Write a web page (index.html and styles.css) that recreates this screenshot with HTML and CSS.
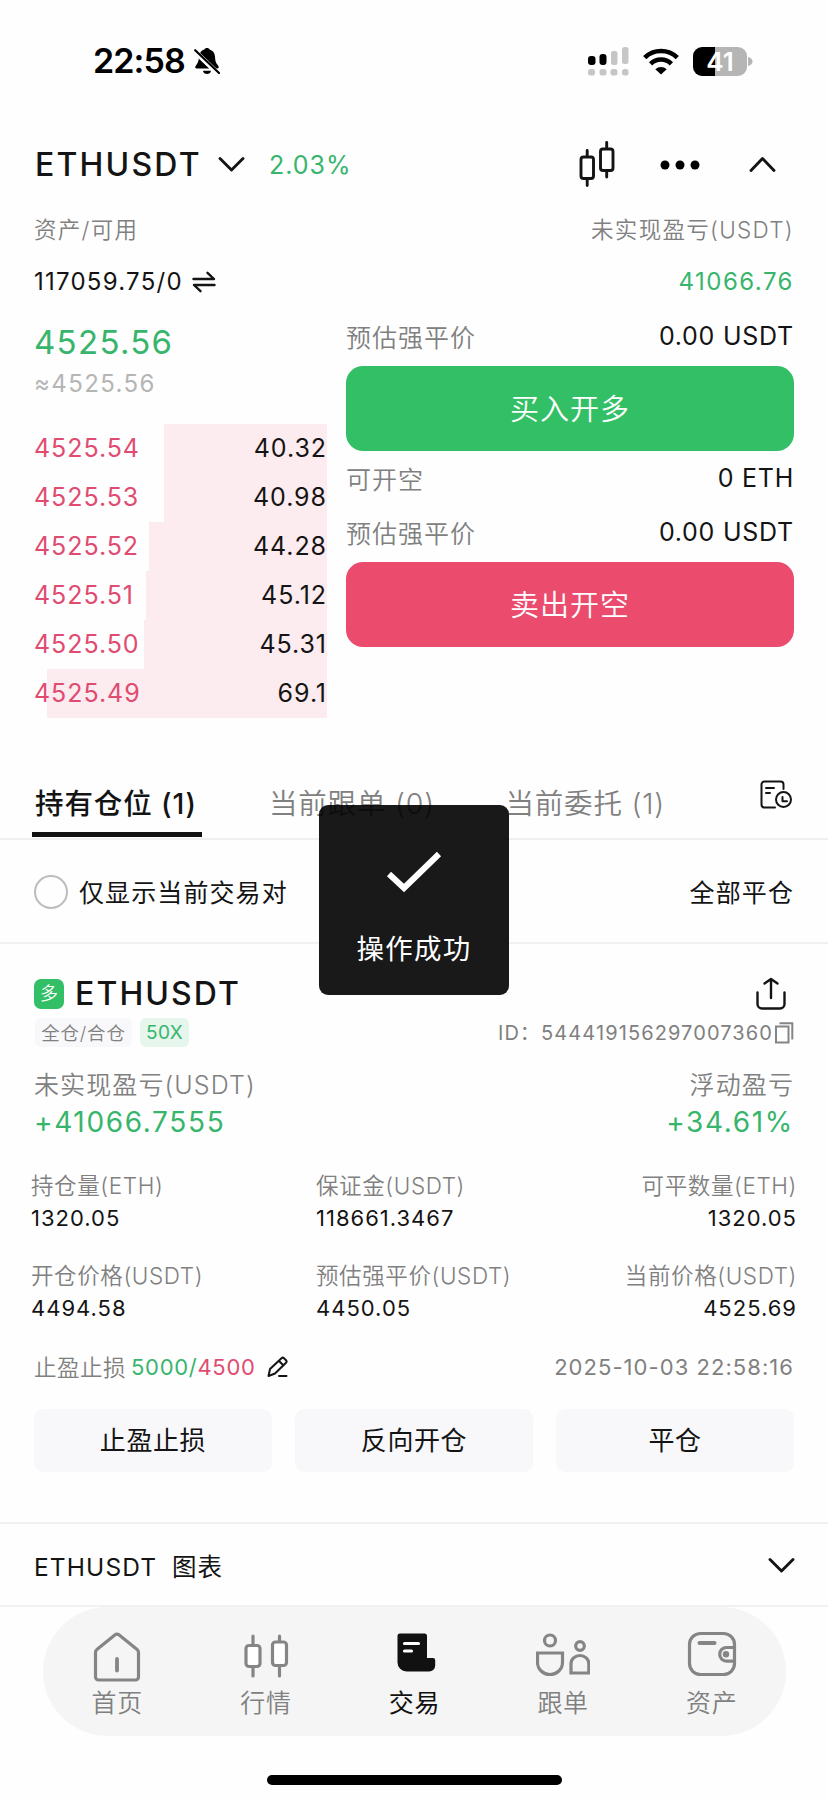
FILE: index.html
```html
<!DOCTYPE html>
<html lang="zh-CN">
<head>
<meta charset="utf-8">
<title>ETHUSDT</title>
<link rel="stylesheet" href="styles.css">
</head>
<body>
<div class="phone">
  <header class="status">
    <div class="clock">22:58</div>
    <svg class="bell" width="26" height="28" viewBox="0 0 26 28"><path d="M3 21.500C1 21.500 .6 20 2 18.400C4.500 15.500 4.600 13.500 5 9.500C5.400 5.500 7.600 3 10.400 2.400C11 .4 15 .4 15.600 2.400C18.600 3.200 20.700 5.500 21 9.500C21.300 14 21.600 15.500 24 18.400C25.300 20 25 21.500 23 21.500Z"/><path d="M9 23.800h8c-.6 4.300-7.400 4.300-8 0z"/><path d="M0 3.500L25.500 28" stroke="#fff" stroke-width="5"/><path d="M1.200 3.200L25 26" stroke="#000" stroke-width="2.200" stroke-linecap="round"/></svg>
    <svg class="signal" width="42" height="29" viewBox="0 0 42 29"><g fill="#000"><rect x="0" y="9" width="7.500" height="9" rx="3"/><rect x="11.500" y="7" width="7" height="11" rx="3"/></g><g fill="#c6c6c6"><rect x="23" y="4" width="6.500" height="14" rx="2.500"/><rect x="34" y="0" width="6.500" height="17" rx="2.500"/><rect x="0" y="22" width="7" height="6.500" rx="2.500"/><rect x="11.500" y="22" width="7" height="6.500" rx="2.500"/><rect x="22.500" y="22" width="7" height="6.500" rx="2.500"/><rect x="34" y="22" width="6.500" height="6.500" rx="2.500"/></g></svg>
    <svg class="wifi" width="36" height="27" viewBox="0 0 36 27" fill="none" stroke="#000" stroke-width="4.600"><path d="M1.700 9.700A23.300 23.300 0 0 1 34.300 9.700"/><path d="M7.600 15.800A14.800 14.800 0 0 1 28.400 15.800"/><path d="M18 26.600L12.300 21.200A8.300 8.300 0 0 1 23.700 21.200Z" fill="#000" stroke="none"/></svg>
    <div class="battery"><span>41</span></div>
    <svg class="battery-cap" width="5" height="9" viewBox="0 0 5 9"><path d="M0 0C6 1.500 6 7.500 0 9Z" fill="#b5b5b5"/></svg>
  </header>

  <section class="topbar">
    <h1 class="pair">ETHUSDT</h1>
    <svg class="chev" width="27" height="17" viewBox="0 0 27 17"><path class="line3" d="M2 2.500L13.500 14L25 2.500"/></svg>
    <span class="change up">2.03%</span>
    <svg class="candles" width="36" height="46" viewBox="0 0 36 46"><g class="line3"><rect x="2" y="16" width="12.500" height="21.500" rx="2.500"/><path d="M8.200 9.500v6M8.200 38v6.500"/><rect x="21.500" y="8" width="12.500" height="21.500" rx="2.500"/><path d="M27.700 1.500v6M27.700 30v6"/></g></svg>
    <svg class="dots" width="40" height="10" viewBox="0 0 40 10"><circle cx="5" cy="5" r="4.500"/><circle cx="20" cy="5" r="4.500"/><circle cx="35" cy="5" r="4.500"/></svg>
    <svg class="caret" width="27" height="17" viewBox="0 0 27 17"><path class="line3" d="M2 14.500L13.500 2.500L25 14.500"/></svg>
  </section>

  <section class="assets">
    <div class="row label-row"><span class="cn">资产/可用</span><span class="cn">未实现盈亏(USDT)</span></div>
    <div class="row value-row"><span class="asset">117059.75/0</span>
      <svg class="swap" width="24" height="22" viewBox="0 0 24 22"><path class="line25" d="M1.500 8h20.500L15.500 1.800M22.500 14H2L8.500 20.200"/></svg>
      <span class="pnl up">41066.76</span></div>
  </section>

  <section class="trade">
    <div class="book">
      <div class="last up">4525.56</div>
      <div class="approx">≈4525.56</div>
      <div class="ask"><i style="width:163px"></i><span>4525.54</span><b>40.32</b></div>
      <div class="ask"><i style="width:163px"></i><span>4525.53</span><b>40.98</b></div>
      <div class="ask"><i style="width:178px"></i><span>4525.52</span><b>44.28</b></div>
      <div class="ask"><i style="width:181px"></i><span>4525.51</span><b>45.12</b></div>
      <div class="ask"><i style="width:183px"></i><span>4525.50</span><b>45.31</b></div>
      <div class="ask"><i style="width:280px"></i><span>4525.49</span><b>69.1</b></div>
    </div>
    <div class="order">
      <div class="order-row r1"><span class="cn">预估强平价</span><span class="num">0.00 USDT</span></div>
      <button class="big buy">买入开多</button>
      <div class="order-row r2"><span class="cn">可开空</span><span class="num">0 ETH</span></div>
      <div class="order-row r3"><span class="cn">预估强平价</span><span class="num">0.00 USDT</span></div>
      <button class="big sell">卖出开空</button>
    </div>
  </section>

  <nav class="tabs">
    <span class="tab on">持有仓位 (1)</span>
    <span class="tab">当前跟单 (0)</span>
    <span class="tab">当前委托 (1)</span>
    <svg class="history" width="33" height="30" viewBox="0 0 33 30"><g class="line2"><path d="M23.500 9V4.500a3 3 0 0 0-3-3H4.500a3 3 0 0 0-3 3v20a3 3 0 0 0 3 3H15"/><path d="M6 8h8M6 13h4"/><circle cx="23.500" cy="19.500" r="7.500"/><path d="M22.500 17v4.200h4.500"/></g></svg>
  </nav>

  <section class="filter">
    <span class="radio"></span><span class="only">仅显示当前交易对</span><span class="close-all">全部平仓</span>
  </section>

  <section class="position">
    <div class="title">
      <span class="side">多</span><h2 class="sym">ETHUSDT</h2>
      <svg class="share" width="30" height="34" viewBox="0 0 30 34"><g class="line25"><path d="M1.500 15.500v11.500a4.500 4.500 0 0 0 4.500 4.500h18a4.500 4.500 0 0 0 4.500-4.500V15.500"/><path d="M15 21V2.500M8.500 6.500L15 2L21.500 6.500"/></g></svg>
    </div>
    <div class="meta">
      <span class="tag mode">全仓/合仓</span><span class="tag lev">50X</span>
      <span class="id-label">ID：</span><span class="id">544419156297007360</span>
      <svg class="copy" width="19" height="22" viewBox="0 0 19 22" fill="none" stroke="#858585" stroke-width="2"><rect x="1" y="4.500" width="12.500" height="16"/><path d="M4.500 1.200H17.300V17.500"/></svg>
    </div>
    <div class="row plabel"><span class="cn">未实现盈亏(USDT)</span><span class="cn">浮动盈亏</span></div>
    <div class="row pvalue up"><span>+41066.7555</span><span>+34.61%</span></div>
    <div class="grid">
      <div class="cell"><span class="k">持仓量(ETH)</span><span class="v">1320.05</span></div>
      <div class="cell"><span class="k">保证金(USDT)</span><span class="v">118661.3467</span></div>
      <div class="cell end"><span class="k">可平数量(ETH)</span><span class="v">1320.05</span></div>
      <div class="cell"><span class="k">开仓价格(USDT)</span><span class="v">4494.58</span></div>
      <div class="cell"><span class="k">预估强平价(USDT)</span><span class="v">4450.05</span></div>
      <div class="cell end"><span class="k">当前价格(USDT)</span><span class="v">4525.69</span></div>
    </div>
    <div class="tpsl">
      <span class="tp-label">止盈止损</span><span class="tp"><em class="up">5000/</em><em class="down">4500</em></span>
      <svg class="pencil" width="22" height="22" viewBox="0 0 22 22"><g class="line2"><path d="M1.500 20L3 13L14.500 2.200a1.800 1.800 0 0 1 2.500 0L19 4.200a1.800 1.800 0 0 1 0 2.500L8 17.500ZM12 5l4.500 4.500M12 20h7.500"/></g></svg>
      <time class="date">2025-10-03 22:58:16</time>
    </div>
    <div class="actions"><button>止盈止损</button><button>反向开仓</button><button>平仓</button></div>
  </section>

  <section class="chart"><span class="chart-sym">ETHUSDT</span><span class="chart-cn">图表</span>
    <svg class="chart-chev" width="27" height="17" viewBox="0 0 27 17"><path class="line3" d="M2 2.500L13.500 14L25 2.500"/></svg>
  </section>

  <nav class="dock">
    <a class="item"><svg width="50" height="54" viewBox="0 0 50 54"><g class="g3"><path d="M3.500 22.500a4 4 0 0 1 1.400-3L22.800 5a3.500 3.500 0 0 1 4.400 0L45.100 19.500a4 4 0 0 1 1.400 3V47a3 3 0 0 1-3 3H6.500a3 3 0 0 1-3-3Z"/><path d="M25 29v11.500" stroke-width="3.800"/></g></svg><span>首页</span></a>
    <a class="item"><svg width="50" height="54" viewBox="0 0 50 54"><g class="g3"><path d="M12 6v10M12 37v9M38.500 6v6M38.500 36v10"/><rect x="5" y="15.500" width="14" height="21" rx="3" fill="#fff"/><rect x="31.500" y="12" width="14" height="23.500" rx="3" fill="#fff"/></g></svg><span>行情</span></a>
    <a class="item on"><svg width="50" height="54" viewBox="0 0 50 54"><path fill="#111" d="M8.500 6a2.500 2.500 0 0 1 2.500-2.500H35.500a2.500 2.500 0 0 1 2.500 2.500V28h6a2.200 2.200 0 0 1 2.200 2.200V35.500a6 6 0 0 1-6 6H17.500a9 9 0 0 1-9-9Z"/><path d="M15.500 13.500h14M15.500 21h7" stroke="#fff" stroke-width="3.200" stroke-linecap="round"/></svg><span>交易</span></a>
    <a class="item"><svg class="people" width="54" height="54" viewBox="0 0 54 54"><g class="g3 sharp"><circle cx="14" cy="10.500" r="5.500"/><path d="M1.500 23h25v9.500a12.500 12 0 0 1-25 0Z"/><circle cx="44" cy="16" r="4.300"/><path d="M35 43V33.500a8.900 8 0 0 1 17.800 0V43Z"/></g></svg><span>跟单</span></a>
    <a class="item"><svg width="50" height="54" viewBox="0 0 50 54"><g class="g3"><rect x="2.500" y="3.500" width="45" height="41" rx="11"/><path d="M12.500 13h15" stroke-width="4"/><path d="M47 17.500H39.500a6.800 6.800 0 0 0 0 13.600H47"/></g><circle cx="39" cy="24.200" r="3.200" fill="#858585"/></svg><span>资产</span></a>
  </nav>
  <div class="home-bar"></div>

  <div class="toast">
    <svg width="56" height="44" viewBox="0 0 56 44"><path d="M3 24L18 38L53 4" fill="none" stroke="#fff" stroke-width="6"/></svg>
    <span>操作成功</span>
  </div>
</div>
</body>
</html>
```
FILE: styles.css
```css
* { box-sizing: border-box; margin: 0; padding: 0; }
body { background: #fff; }
.phone {
  position: relative; width: 828px; height: 1800px; overflow: hidden; background: #fefefe;
  display: flex; flex-direction: column; color: #141414;
  font-family: Inter, "Noto Sans CJK SC", sans-serif; font-weight: 400; line-height: 1.2; white-space: nowrap;
}
svg { display: block; flex: none; }
button { border: 0; font: inherit; color: inherit; white-space: nowrap; }
em, b, i { font-style: normal; font-weight: inherit; }
.up { color: #38b56c; }
.down { color: #e04c71; }
.cn { font-weight: 350; color: #808080; }
.row { display: flex; justify-content: space-between; align-items: center; }
.line2, .line25, .line3 { fill: none; stroke: #141414; stroke-width: 2; stroke-linecap: round; stroke-linejoin: round; }
.line25 { stroke-width: 2.4; }
.line3 { stroke-width: 2.9; }

.status { height: 126px; padding: 0 75px 3px 93px; display: flex; align-items: center; }
.clock { font-size: 34px; font-weight: 600; color: #000; width: 101px; letter-spacing: -.9px; }
.bell { margin-top: -2px; }
.signal { margin-left: auto; margin-right: 13px; }
.wifi { margin-right: 14px; }
.battery { width: 54px; height: 29px; border-radius: 9px; background: linear-gradient(90deg, #000 22px, #b5b5b5 22px); color: #fff; font-weight: 600; font-size: 26px; line-height: 29px; text-align: center; }
.battery-cap { margin-left: 1px; }

.topbar { height: 77px; display: flex; align-items: center; padding: 0 52px 0 35px; }
.pair { font-size: 32px; font-weight: 550; letter-spacing: 2.2px; width: 183px; margin-top: 2px; }
.change { font-size: 25px; letter-spacing: 1px; margin-left: 24px; font-weight: 370; }
.candles { margin-left: auto; margin-top: -2px; }
.dots { margin-left: 45px; }
.caret { margin-left: 49px; }

.assets { padding: 0 34px; }
.label-row { height: 52px; font-size: 22.5px; letter-spacing: 1.3px; }
.value-row { height: 52px; padding-top: 2px; font-size: 24px; letter-spacing: 1.25px; }
.swap { margin-left: 9px; margin-right: auto; }
.pnl { letter-spacing: 1.5px; font-weight: 370; }

.trade { height: 461px; display: flex; padding: 0 34px 0 34px; justify-content: space-between; }
.book { width: 293px; padding-top: 10px; font-weight: 370; }
.last { height: 50px; line-height: 50px; font-size: 33px; letter-spacing: 1.3px; }
.approx { height: 34px; line-height: 34px; font-size: 24px; letter-spacing: 1.4px; color: #b5b5b5; margin-bottom: 23px; }
.ask { position: relative; height: 49px; padding-bottom: 2px; display: flex; align-items: center; justify-content: space-between; font-size: 25px; letter-spacing: .95px; color: #141414; }
.ask i { position: absolute; right: 0; top: 0; height: 49px; background: #fcebef; }
.ask span, .ask b { position: relative; }
.ask span { color: #e04c71; }
.ask b { font-weight: 400; }
.order { width: 448px; }
.order-row { display: flex; justify-content: space-between; align-items: center; }
.order-row .cn { font-size: 25px; letter-spacing: 1px; }
.order-row .num { font-size: 25px; letter-spacing: .75px; margin-top: -4px; }
.r1 { height: 59px; padding-top: 2px; }
.r2 { height: 55px; padding-top: 2px; }
.r3 { height: 56px; }
.big { display: block; width: 448px; height: 85px; padding-top: 3px; border-radius: 17px; color: #fff; font-size: 29px; font-weight: 350; letter-spacing: 1px; }
.buy { background: #33bf65; }
.sell { background: #eb4b6d; }

.tabs { height: 72px; border-bottom: 2px solid #f0f0f0; display: flex; align-items: center; padding: 2px 35px 0; }
.tab { position: relative; font-size: 28.5px; font-weight: 350; color: #808080; letter-spacing: .8px; width: 236.500px; }
.tab:first-child { width: 234px; }
.tab.on { font-weight: 500; color: #141414; letter-spacing: .9px; }
.tab.on::after { content: ""; position: absolute; left: -3px; top: 45px; width: 170px; height: 5px; background: #111; }
.history { margin-left: auto; margin-top: -18px; }

.filter { height: 104px; border-bottom: 2px solid #f1f1f1; display: flex; align-items: center; padding: 2px 34px 0; font-size: 25px; letter-spacing: 1.1px; }
.radio { width: 34px; height: 34px; border: 2.5px solid #bdbdbd; border-radius: 50%; margin-right: 11px; }
.only, .close-all { padding-top: 2px; }
.close-all { margin-left: auto; }

.position { height: 578px; padding: 32px 34px 0; }
.title { height: 36px; display: flex; align-items: center; }
.side { width: 30px; height: 30px; border-radius: 7px; background: #33bf65; color: #fff; font-size: 18px; font-weight: 350; line-height: 30px; text-align: center; margin-right: 11px; }
.sym { font-size: 32px; font-weight: 550; letter-spacing: 2.1px; padding-top: 1px; }
.share { margin-left: auto; margin-right: 8px; }
.meta { height: 29px; margin-top: 6px; display: flex; align-items: center; color: #808080; font-size: 20px; }
.tag { height: 29px; line-height: 30px; border-radius: 6px; text-align: center; }
.mode { width: 97px; font-size: 18.5px; font-weight: 350; letter-spacing: .8px; background: #f8f8fb; margin-right: 8px; margin-left: 1px; }
.lev { width: 49px; font-size: 19px; letter-spacing: .4px; color: #38b56c; background: #e6f6ec; }
.id-label { margin-left: auto; width: 43px; letter-spacing: 1px; }
.id { letter-spacing: 1.1px; }
.copy { margin-left: 2px; }
.plabel { height: 32px; margin-top: 22px; font-size: 25px; letter-spacing: 1.1px; }
.pvalue { height: 36px; margin-top: 4px; font-size: 28px; letter-spacing: 1.65px; font-weight: 370; }
.grid { display: grid; grid-template-columns: 285px 240px 241px; margin: 32px -3px 0; row-gap: 32px; }
.cell { display: flex; flex-direction: column; gap: 6px; line-height: 26px; height: 58px; font-size: 22px; }
.cell.end { align-items: flex-end; }
.k { font-weight: 350; font-size: 22.5px; color: #808080; letter-spacing: .6px; }
.v { letter-spacing: 1px; }
.tpsl { height: 32px; margin-top: 30px; display: flex; align-items: center; color: #808080; font-size: 22.5px; }
.tp-label { font-weight: 350; letter-spacing: .5px; width: 97px; }
.tp { font-size: 22px; letter-spacing: .7px; }
.pencil { margin-left: 11px; }
.date { margin-left: auto; font-size: 22px; letter-spacing: 1.05px; }
.actions { display: flex; justify-content: space-between; margin-top: 26px; }
.actions button { width: 238px; height: 63px; padding-top: 1px; border-radius: 9px; background: #f8f8fb; font-size: 26px; letter-spacing: .6px; }

.chart { height: 85px; border-top: 2px solid #f0f0f0; border-bottom: 2px solid #f1f1f1; display: flex; align-items: center; padding: 5px 34px 0; font-size: 24.5px; letter-spacing: 1.1px; }
.chart-sym, .chart-cn { padding-top: 2px; }
.chart-sym { width: 138px; }
.chart-chev { margin-left: auto; margin-right: -1px; margin-top: -3px; }

.dock { height: 129px; width: 743px; margin-left: 43px; border-radius: 65px; background: #f5f5f5; display: flex; }
.item { width: 148.6px; display: flex; flex-direction: column; align-items: center; padding-top: 23px; color: #808080; font-size: 25px; font-weight: 350; letter-spacing: .7px; line-height: 30px; }
.item span { margin-top: 4px; }
.item.on { color: #111; font-weight: 400; }
.g3 { fill: none; stroke: #858585; stroke-width: 3.2; stroke-linecap: round; stroke-linejoin: round; }
.sharp { stroke-linejoin: miter; }
.home-bar { width: 295px; height: 10px; border-radius: 5px; background: #000; margin: 39px 0 0 267px; }

.toast { position: absolute; left: 319px; top: 805px; width: 190px; height: 190px; border-radius: 9px; background: rgba(0, 0, 0, .9); display: flex; flex-direction: column; align-items: center; padding-top: 45px; color: #fff; font-size: 27.5px; letter-spacing: 1.2px; }
.toast span { margin-top: 39px; }
```
